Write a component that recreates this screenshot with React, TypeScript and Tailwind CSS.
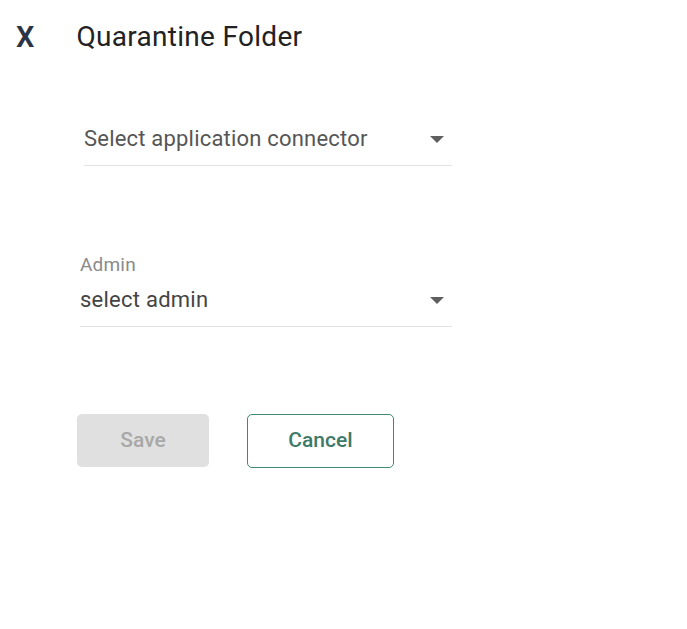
import React from "react";

function Caret() {
  return (
    <svg width="14" height="7" viewBox="0 0 14 7" className="shrink-0">
      <path d="M0 0 L14 0 L7 7 Z" fill="#5f5f5f" />
    </svg>
  );
}

export default function App() {
  return (
    <div className="w-[687px] h-[629px] bg-white font-['Roboto',sans-serif]">
      <div className="h-[74px] flex items-center">
        <span className="ml-[16px] text-[29px] leading-none font-semibold text-[#2c3444]">X</span>
        <span className="ml-[42px] text-[28px] leading-none tracking-[0.3px] text-[#222222]">Quarantine Folder</span>
      </div>

      <div className="ml-[84px] w-[368px] mt-[49px] border-b border-[#e3e3e3] pb-[10px] flex items-center justify-between pr-[8px]">
        <span className="text-[22px] leading-[32px] tracking-[0.2px] text-[#565656]">Select application connector</span>
        <Caret />
      </div>

      <div className="ml-[80px] w-[372px] mt-[87px]">
        <div className="text-[19px] leading-[24px] tracking-[0.2px] text-[#8a8a8a]">Admin</div>
        <div className="mt-[7px] border-b border-[#e3e3e3] pb-[10px] flex items-center justify-between pr-[8px]">
          <span className="text-[22px] leading-[32px] tracking-[0.25px] text-[#444444]">select admin</span>
          <Caret />
        </div>
      </div>

      <div className="ml-[77px] mt-[87px] flex gap-[38px]">
        <button className="w-[132px] h-[53px] rounded-[5px] bg-[#e0e0e0] text-[21px] font-medium text-[#a8a8a8]">
          Save
        </button>
        <button className="w-[147px] h-[54px] rounded-[5px] border-[1.5px] border-[#3e8a74] bg-white text-[21px] font-medium text-[#3d7a68]">
          Cancel
        </button>
      </div>
    </div>
  );
}
